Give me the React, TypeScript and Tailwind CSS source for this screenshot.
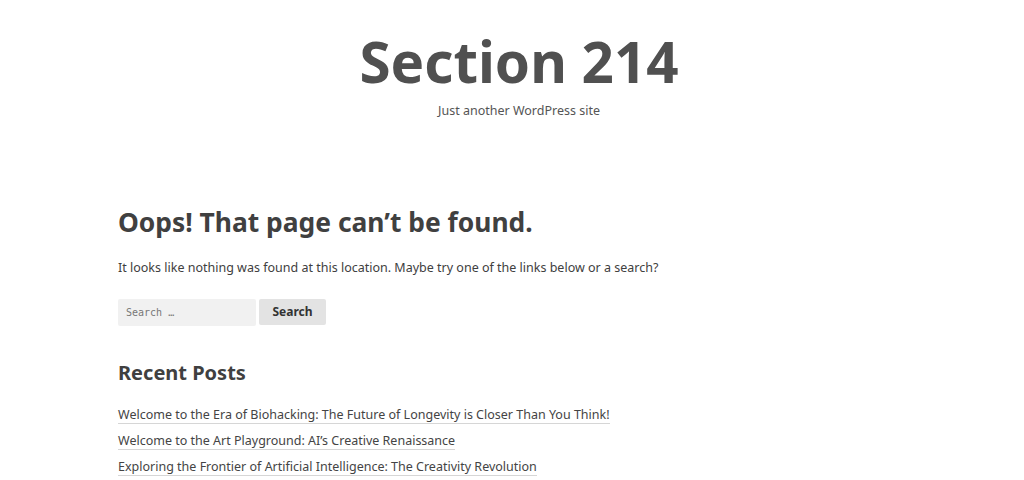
import React from "react";

const posts = [
  "Welcome to the Era of Biohacking: The Future of Longevity is Closer Than You Think!",
  "Welcome to the Art Playground: AI\u2019s Creative Renaissance",
  "Exploring the Frontier of Artificial Intelligence: The Creativity Revolution",
];

export default function App() {
  return (
    <div className="min-h-[480px] bg-white font-['Noto_Sans',sans-serif] text-[#404040]">
      <header className="flex flex-col items-center pl-[14px] pt-[29px]">
        <h1 className="text-[56.5px] font-bold leading-[66px] text-[#505050]">Section 214</h1>
        <p className="mt-[7px] text-[12.5px] leading-[18px] text-[#555]">Just another WordPress site</p>
      </header>

      <main className="ml-[118px] mt-[84px] w-[600px]">
        <h2 className="text-[26.4px] font-bold leading-[36px] text-[#404040]">
          Oops! That page can&rsquo;t be found.
        </h2>
        <p className="mt-[18px] text-[12.5px] leading-[20px]">
          It looks like nothing was found at this location. Maybe try one of the links below or a search?
        </p>

        <form className="mt-[21px] flex items-start gap-[3px]" onSubmit={(e) => e.preventDefault()}>
          <input
            placeholder="Search …"
            className="h-[27px] w-[138px] rounded-[2px] bg-[#f1f1f1] px-2 font-['DejaVu_Sans_Mono',monospace] text-[10px] placeholder:text-[#777] outline-none"
          />
          <button className="h-[26px] w-[67px] rounded-[2px] bg-[#e3e3e3] text-[12px] font-bold text-[#333]">
            Search
          </button>
        </form>

        <h2 className="mt-[33px] text-[20px] font-bold leading-[28px] text-[#404040]">Recent Posts</h2>
        <ul className="mt-[19px] flex flex-col items-start gap-[7px] text-[12.5px]">
          {posts.map((p) => (
            <li key={p}>
              <a href="#" className="border-b border-[#d6d6d6] leading-[18px] text-[#444]">
                {p}
              </a>
            </li>
          ))}
        </ul>
      </main>
    </div>
  );
}
